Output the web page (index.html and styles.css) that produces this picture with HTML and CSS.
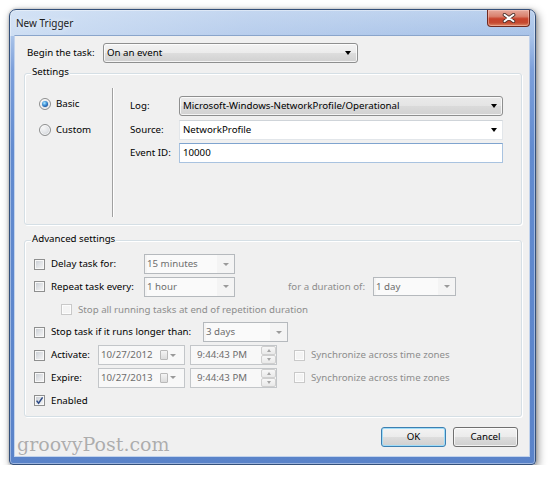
FILE: index.html
```html
<!DOCTYPE html>
<html>
<head>
<meta charset="utf-8">
<title>New Trigger</title>
<link rel="stylesheet" href="styles.css">
</head>
<body>
<div class="window">
  <div class="titlebar">
    <span class="title">New Trigger</span>
    <div class="close">
      <svg width="14" height="10" viewBox="0 0 14 10"><path d="M2.5 1.8 L11.5 8.2 M11.5 1.8 L2.5 8.2" stroke="#4a2f2a" stroke-width="3.6" stroke-linecap="round"/><path d="M2.5 1.8 L11.5 8.2 M11.5 1.8 L2.5 8.2" stroke="#ffffff" stroke-width="1.9" stroke-linecap="round"/></svg>
    </div>
  </div>
  <div class="client">
    <div class="begin-row">
      <span class="begin-label">Begin the task:</span>
      <div class="combo combo-btn begin-combo"><span class="combo-text">On an event</span><span class="arrow"></span></div>
    </div>

    <div class="group settings">
      <div class="legend">Settings</div>
      <div class="settings-body">
        <div class="radios">
          <div class="radio-row"><span class="radio"><span class="dot"></span></span><span>Basic</span></div>
          <div class="radio-row"><span class="radio"></span><span>Custom</span></div>
        </div>
        <div class="vsep"></div>
        <div class="fields">
          <div class="field-row">
            <span class="field-label">Log:</span>
            <div class="combo combo-btn combo-flat field-ctl"><span class="combo-text">Microsoft-Windows-NetworkProfile/Operational</span><span class="arrow arrow-log"></span></div>
          </div>
          <div class="field-row">
            <span class="field-label">Source:</span>
            <div class="combo combo-edit field-ctl"><span class="combo-text">NetworkProfile</span><span class="arrow arrow-log"></span></div>
          </div>
          <div class="field-row">
            <span class="field-label">Event ID:</span>
            <div class="combo textbox field-ctl"><span class="combo-text">10000</span></div>
          </div>
        </div>
      </div>
    </div>

    <div class="group advanced">
      <div class="legend">Advanced settings</div>
      <div class="adv-body">
        <div class="adv-row">
          <div class="chk-label w-delay"><span class="check"></span><span>Delay task for:</span></div>
          <div class="combo combo-dis w-91"><span class="combo-text dis-val">15 minutes</span><span class="dis-btn"><span class="arrow-dis"></span></span></div>
        </div>
        <div class="adv-row">
          <div class="chk-label w-delay"><span class="check"></span><span>Repeat task every:</span></div>
          <div class="combo combo-dis w-91"><span class="combo-text dis-val">1 hour</span><span class="dis-btn"><span class="arrow-dis"></span></span></div>
          <span class="dur-label dis">for a duration of:</span>
          <div class="combo combo-dis w-83"><span class="combo-text dis-val">1 day</span><span class="dis-btn"><span class="arrow-dis"></span></span></div>
        </div>
        <div class="adv-row indent">
          <div class="chk-label"><span class="check check-dis"></span><span class="dis">Stop all running tasks at end of repetition duration</span></div>
        </div>
        <div class="adv-row">
          <div class="chk-label w-stop"><span class="check"></span><span>Stop task if it runs longer than:</span></div>
          <div class="combo combo-dis w-85"><span class="combo-text dis-val">3 days</span><span class="dis-btn"><span class="arrow-dis"></span></span></div>
        </div>
        <div class="adv-row">
          <div class="chk-label w-act"><span class="check"></span><span>Activate:</span></div>
          <div class="combo datebox"><span class="combo-text dis-val">10/27/2012</span><span class="cal"></span><span class="arrow-dis cal-arrow"></span></div>
          <div class="combo timebox"><span class="combo-text dis-val">9:44:43 PM</span><span class="spin"><span class="spin-btn"><span class="up"></span></span><span class="spin-btn"><span class="down"></span></span></span></div>
          <div class="chk-label sync"><span class="check check-dis"></span><span class="dis">Synchronize across time zones</span></div>
        </div>
        <div class="adv-row">
          <div class="chk-label w-act"><span class="check"></span><span>Expire:</span></div>
          <div class="combo datebox"><span class="combo-text dis-val">10/27/2013</span><span class="cal"></span><span class="arrow-dis cal-arrow"></span></div>
          <div class="combo timebox"><span class="combo-text dis-val">9:44:43 PM</span><span class="spin"><span class="spin-btn"><span class="up"></span></span><span class="spin-btn"><span class="down"></span></span></span></div>
          <div class="chk-label sync"><span class="check check-dis"></span><span class="dis">Synchronize across time zones</span></div>
        </div>
        <div class="adv-row">
          <div class="chk-label"><span class="check checked"><svg width="9" height="9" viewBox="0 0 9 9"><path d="M1.6 4.6 L3.6 7.2 L7.6 1.4" fill="none" stroke="#2d4a86" stroke-width="1.5"/></svg></span><span>Enabled</span></div>
        </div>
      </div>
    </div>

    <div class="footer">
      <div class="btn btn-default">OK</div>
      <div class="btn">Cancel</div>
    </div>
  </div>
  <div class="watermark">groovyPost.com</div>
</div>
</body>
</html>
```

FILE: styles.css
```css
* { box-sizing: border-box; }
html, body { margin: 0; padding: 0; background: #ffffff; }
body {
  padding: 9px 0 0 9px;
  font-family: "Noto Sans", "Open Sans", sans-serif;
  font-size: 9.7px;
  line-height: 14px;
  color: #000;
}

.window {
  position: relative;
  width: 527px;
  height: 456px;
  border: 1px solid #34507a;
  border-radius: 7px 7px 4px 4px;
  background:
    linear-gradient(90deg, rgba(215,229,246,.8) 0%, rgba(196,214,240,.55) 45%, rgba(160,190,230,.25) 100%) top left / 100% 26px no-repeat,
    linear-gradient(180deg, #c4d7f0 0px, #a9c3e8 26px, #7c9fda 60px, #628bcf 140px, #5a83c9 456px);
  box-shadow: inset 0 0 0 1px rgba(255,255,255,.4), 2px 3px 8px rgba(0,0,0,.45), 0 0 3px rgba(0,0,0,.25);
  padding: 0 5px 7px 4px;
  display: flex;
  flex-direction: column;
}

.titlebar {
  height: 25px;
  display: flex;
  align-items: flex-start;
  justify-content: space-between;
}
.title {
  margin: 6px 0 0 2px;
  font-size: 10px;
  color: #1b1b1b;
  text-shadow: 0 0 6px rgba(255,255,255,.9);
}
.close {
  width: 43px;
  height: 17px;
  border: 1px solid #6f2a20;
  border-top: none;
  border-radius: 0 0 4px 4px;
  background: linear-gradient(180deg, #e6a99c 0%, #d9806d 40%, #c8432c 55%, #c54a31 80%, #de8a67 100%);
  box-shadow: inset 0 0 0 1px rgba(255,210,200,.45);
  display: flex;
  align-items: center;
  justify-content: center;
}

.client {
  flex: 1;
  background: #f0f0f0;
  border: 1px solid #c2d3ec;
  border-top-color: #8aa5cb;
  display: flex;
  flex-direction: column;
}

.begin-row {
  display: flex;
  align-items: center;
  margin-top: 7px;
  padding-left: 12px;
  height: 20px;
}
.begin-label { width: 76px; }
.begin-combo { width: 255px; }

.combo {
  height: 20px;
  display: flex;
  align-items: center;
  flex: none;
}
.combo-text { flex: 1; white-space: nowrap; overflow: hidden; }
.combo-btn {
  border: 1px solid #8e8f8f;
  border-radius: 3px;
  background: linear-gradient(180deg, #f3f3f3 0%, #ebebeb 50%, #dddddd 51%, #d0d0d0 100%);
  box-shadow: inset 0 0 0 1px rgba(255,255,255,.75);
  padding-left: 3px;
}
.combo-flat {
  background: linear-gradient(180deg, #eaeaea 0%, #e4e4e4 50%, #dadada 51%, #d2d2d2 100%);
}
.arrow {
  width: 0; height: 0;
  border-left: 3.5px solid transparent;
  border-right: 3.5px solid transparent;
  border-top: 4px solid #000;
  margin-right: 6px;
}
.arrow-log { margin-right: 5px; }

.combo-edit {
  background: #fff;
  border: 1px solid #e2e6ea;
  border-top-color: #cfd4d9;
  padding-left: 3px;
}
.textbox {
  background: #fff;
  border: 1px solid #a9c3e0;
  border-top-color: #7fa4cf;
  padding-left: 3px;
}

.group {
  border: 1px solid #d5dfe5;
  border-radius: 3px;
  box-shadow: inset 1px 1px 0 #fff, 1px 1px 0 #fff;
  margin-left: 9px;
  margin-right: 7px;
}
.legend {
  width: fit-content;
  height: 14px;
  margin: -9px 0 0 6px;
  padding: 0 1px;
  background: #f0f0f0;
}
.settings { margin-top: 10px; height: 152px; }
.settings-body {
  display: flex;
  padding-top: 9px;
}
.radios {
  width: 87px;
  padding: 8px 0 0 14px;
  display: flex;
  flex-direction: column;
  gap: 10px;
}
.radio-row { display: flex; align-items: center; height: 16px; gap: 5px; }
.radio {
  width: 12px; height: 12px;
  border-radius: 50%;
  border: 1px solid #8e8f8f;
  background: radial-gradient(circle at 35% 30%, #f7f7f7 0%, #e2e4e7 50%, #c5c9ce 100%);
  box-shadow: inset 0 0 0 1px rgba(255,255,255,.8);
  display: flex;
  align-items: center;
  justify-content: center;
  flex: none;
}
.dot {
  width: 6px; height: 6px;
  border-radius: 50%;
  background: radial-gradient(circle at 40% 35%, #b6eaff 0%, #4fa2e0 35%, #1a5aa8 70%, #0b3470 100%);
}
.vsep {
  width: 2px;
  height: 129px;
  border-left: 1px solid #a0a0a0;
  border-right: 1px solid #ffffff;
}
.fields {
  padding: 8px 0 0 16px;
  display: flex;
  flex-direction: column;
  gap: 3.5px;
}
.field-row { display: flex; align-items: center; height: 20px; }
.field-label { width: 49px; }
.field-ctl { width: 324px; }

.advanced { margin-top: 15px; }
.adv-body {
  padding: 8px 0 5px 9px;
  display: flex;
  flex-direction: column;
  gap: 2.8px;
}
.adv-row { display: flex; align-items: center; height: 20px; }
.indent { padding-left: 27px; }
.chk-label { display: flex; align-items: center; gap: 6px; white-space: nowrap; flex: none; }
.w-delay { width: 110px; }
.w-stop { width: 169px; }
.w-act { width: 64px; }
.sync { margin-left: 17px; }

.check {
  width: 11px; height: 11px;
  border: 1px solid #8e8f8f;
  background: linear-gradient(135deg, #c6cbd1 0%, #e3e5e8 55%, #f6f6f6 100%);
  box-shadow: inset 0 0 0 1px #f8f8f8;
  flex: none;
  display: flex;
  align-items: center;
  justify-content: center;
}
.check-dis {
  border-color: #c9c9c9;
  background: #f4f4f4;
  box-shadow: inset 0 0 0 1px #fcfcfc;
}
.check.checked svg { display: block; }

.dis { color: #8d8d8d; }
.dis-val { color: #6d6d6d; }

.combo-dis {
  border: 1px solid #b5b9bd;
  background: #f4f4f4;
  padding-left: 2px;
}
.combo-dis .combo-text { background: #fafafa; height: 100%; display: flex; align-items: center; }
.dis-btn {
  width: 17px;
  height: 100%;
  display: flex;
  align-items: center;
  justify-content: center;
}
.arrow-dis {
  width: 0; height: 0;
  border-left: 3px solid transparent;
  border-right: 3px solid transparent;
  border-top: 3px solid #9a9a9a;
}
.w-91 { width: 91px; }
.w-83 { width: 83px; height: 19px; }
.w-85 { width: 85px; }
.dur-label { margin-left: 53px; width: 85px; white-space: nowrap; }

.datebox {
  width: 87px;
  border: 1px solid #c3c6c9;
  background: #f8f8f8;
  padding-left: 2px;
  margin-right: 5px;
}
.cal {
  width: 8px; height: 10px;
  border: 1px solid #b9b9b9;
  border-radius: 1px;
  background: linear-gradient(180deg, #f4f4f4, #dcdcdc);
  margin-right: 2px;
}
.cal-arrow { margin-right: 8px; }

.timebox {
  width: 87px;
  border: 1px solid #c3c6c9;
  background: #f8f8f8;
  padding-left: 6px;
}
.spin {
  width: 15px;
  height: 100%;
  display: flex;
  flex-direction: column;
  padding: 0;
}
.spin-btn {
  flex: 1;
  border: 1px solid #cfcfcf;
  border-radius: 2px;
  background: linear-gradient(180deg, #f7f7f7, #e9e9e9);
  display: flex;
  align-items: center;
  justify-content: center;
}
.up {
  width: 0; height: 0;
  border-left: 2.5px solid transparent;
  border-right: 2.5px solid transparent;
  border-bottom: 3px solid #a5a5a5;
}
.down {
  width: 0; height: 0;
  border-left: 2.5px solid transparent;
  border-right: 2.5px solid transparent;
  border-top: 3px solid #a5a5a5;
}

.footer {
  display: flex;
  justify-content: flex-end;
  gap: 7px;
  margin-top: 10px;
  padding-right: 11px;
}
.btn {
  width: 65px;
  height: 20px;
  border: 1px solid #707070;
  border-radius: 3px;
  background: linear-gradient(180deg, #f3f3f3 0%, #ebebeb 50%, #dddddd 51%, #cfcfcf 100%);
  box-shadow: inset 0 0 0 1px rgba(255,255,255,.7);
  display: flex;
  align-items: center;
  justify-content: center;
}
.btn-default {
  border-color: #3c7fb1;
  box-shadow: inset 0 0 0 1px #9fdcf8;
}

.watermark {
  position: absolute;
  left: 7px;
  top: 425px;
  font-family: "DejaVu Serif", "Liberation Serif", serif;
  font-size: 19px;
  line-height: 19px;
  color: #adadad;
  text-shadow: 0 0 1px rgba(255,255,255,.8);
}
```
